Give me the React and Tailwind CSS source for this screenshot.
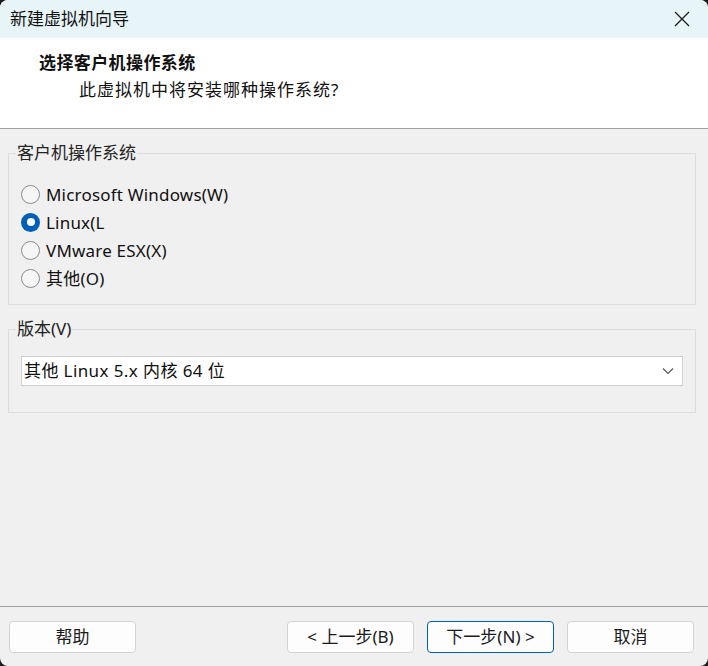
import React from "react";

const font = { fontFamily: '"Segoe UI", "Noto Sans", "Noto Sans CJK SC", sans-serif' };

function Radio({ checked, label }) {
  return (
    <div className="flex items-center h-[28px]">
      {checked ? (
        <span className="w-[19px] h-[19px] rounded-full bg-[#005fb8] flex items-center justify-center">
          <span className="w-[8px] h-[8px] rounded-full bg-white" />
        </span>
      ) : (
        <span className="w-[19px] h-[19px] rounded-full border border-[#8a8a8a] bg-[#f6f6f6]" />
      )}
      <span className="ml-[6px] text-[17px] text-[#111] leading-none tracking-[0.2px]">{label}</span>
    </div>
  );
}

function Button({ children, primary }) {
  return (
    <button
      className={
        "w-[127px] h-[32px] rounded-[4px] bg-[#fdfdfd] text-[17px] text-[#1a1a1a] flex items-center justify-center " +
        (primary ? "border border-[#005fb8]" : "border border-[#d3d3d3]")
      }
    >
      {children}
    </button>
  );
}

export default function App() {
  return (
    <div className="w-[708px] h-[666px] bg-[#1c1c1c]" style={font}>
      <div className="w-full h-full bg-[#f0f0f0] rounded-[8px] overflow-hidden flex flex-col">
        {/* Title bar */}
        <div className="h-[38px] bg-[#e8f5f8] flex items-center justify-between pl-[10px] pr-[16px] shrink-0">
          <span className="text-[17px] text-[#111]">新建虚拟机向导</span>
          <svg width="16" height="16" viewBox="0 0 16 16" className="mr-[2px]">
            <path d="M1 1 L15 15 M15 1 L1 15" stroke="#1a1a1a" strokeWidth="1.3" fill="none" />
          </svg>
        </div>
        {/* Header */}
        <div className="h-[91px] bg-white border-b border-[#a0a0a0] shrink-0 pt-[13px] pl-[39px]">
          <div className="text-[17px] font-bold text-[#111] leading-[24px] tracking-[0.4px]">选择客户机操作系统</div>
          <div className="text-[17px] text-[#111] leading-[24px] mt-[3px] pl-[40px] tracking-[1px]">此虚拟机中将安装哪种操作系统?</div>
        </div>
        {/* Content */}
        <div className="flex-1 pl-[8px] pr-[12px] pt-[13px] flex flex-col gap-[13px]">
          <fieldset className="border border-[#dcdcdc] h-[163px] px-[8px] pt-[16px]">
            <legend className="text-[17px] text-[#222] leading-[22px] px-[1px] -ml-[1px]">客户机操作系统</legend>
            <div className="flex flex-col pl-[4px]">
              <Radio label="Microsoft Windows(W)" />
              <Radio checked label="Linux(L" />
              <Radio label="VMware ESX(X)" />
              <Radio label="其他(O)" />
            </div>
          </fieldset>
          <fieldset className="border border-[#dcdcdc] h-[95px] px-[12px] pt-[16px]">
            <legend className="text-[17px] text-[#222] leading-[22px] px-[1px] -ml-[5px]">版本(V)</legend>
            <div className="h-[30px] bg-white border border-[#cfcfcf] flex items-center justify-between pl-[2px] pr-[8px]">
              <span className="text-[17px] text-[#111] tracking-[0.4px]">其他 Linux 5.x 内核 64 位</span>
              <svg width="12" height="8" viewBox="0 0 12 8">
                <path d="M1 1.5 L6 6.5 L11 1.5" stroke="#555" strokeWidth="1.1" fill="none" />
              </svg>
            </div>
          </fieldset>
        </div>
        {/* Footer */}
        <div className="h-[60px] border-t border-[#a0a0a0] shrink-0 flex items-start pt-[14px] pl-[9px] pr-[14px]">
          <Button>帮助</Button>
          <div className="flex-1" />
          <div className="flex gap-[13px]">
            <Button>&lt; 上一步(B)</Button>
            <Button primary>下一步(N) &gt;</Button>
            <Button>取消</Button>
          </div>
        </div>
      </div>
    </div>
  );
}
